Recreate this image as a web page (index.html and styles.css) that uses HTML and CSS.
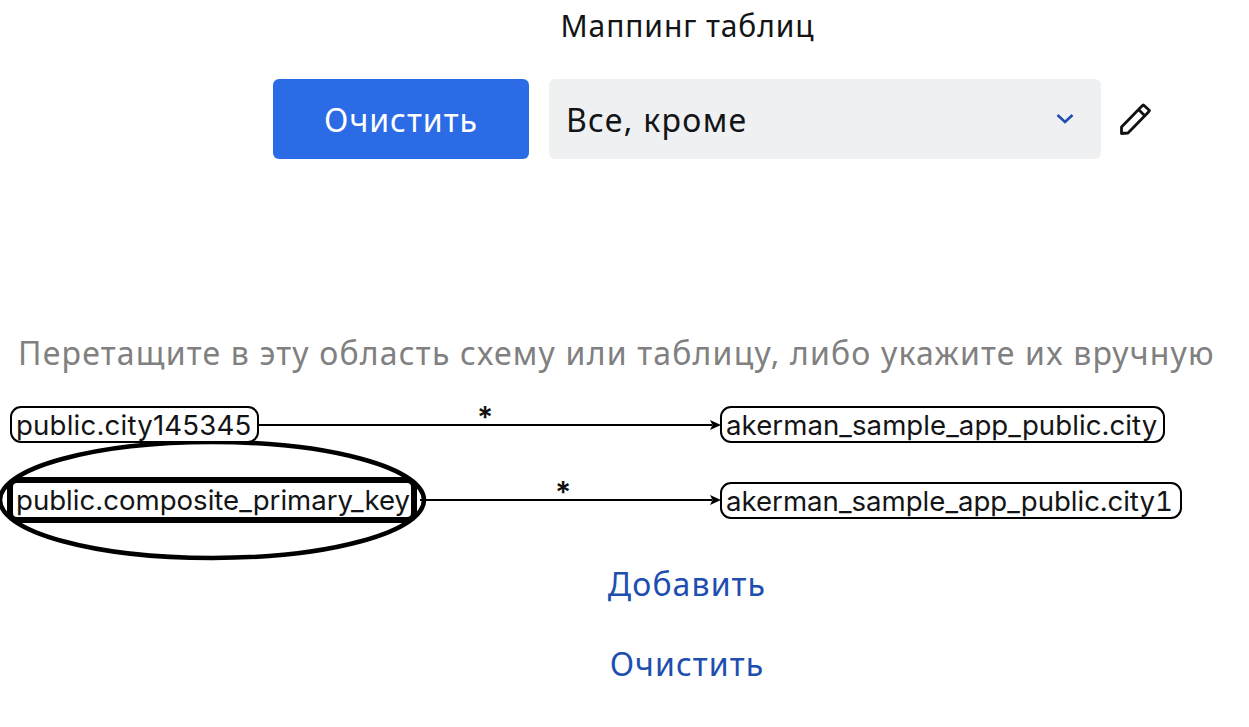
FILE: index.html
```html
<!DOCTYPE html>
<html lang="ru">
<head>
    <meta charset="UTF-8">
    <title>Маппинг таблиц</title>
    <link rel="stylesheet" href="styles.css">
</head>
<body>
    <div class="page">
        <h1 class="title">Маппинг таблиц</h1>

        <div class="toolbar">
            <button class="btn-clear">Очистить</button>
            <div class="select">
                <span>Все, кроме</span>
                <svg class="select-arrow" width="20" height="20" viewBox="0 0 20 20"><path d="M2.500 6 L10 13 L17.500 6" fill="none" stroke="#1d4eb0" stroke-width="2.600"/></svg>
            </div>
            <svg class="edit-icon" width="34" height="34" viewBox="0 0 34 34"><path d="M3.500 31.500 L3.500 25 L24 4 L25.500 3 L31.500 8.500 L30.500 10 L10 31 Z M20.500 7.500 L27 14" fill="none" stroke="#111" stroke-width="2.800" stroke-linejoin="round"/></svg>
        </div>

        <p class="hint">Перетащите в эту область схему или таблицу, либо укажите их вручную</p>

        <!-- Схема связей: узлы стоят на свободном холсте -->
        <div class="diagram">
            <svg class="links" width="1249" height="170" viewBox="0 0 1249 170">
                <ellipse cx="212" cy="100" rx="212" ry="58" fill="none" stroke="#000" stroke-width="4.500"/>
                <path d="M258 25 H712 M420 100 H712" stroke="#000" stroke-width="2"/>
                <path d="M710 20 L721 25 L710 30 L712.500 25 Z M710 95 L721 100 L710 105 L712.500 100 Z" fill="#000"/>
            </svg>
            <div class="node node-src1">public.city145345</div>
            <div class="node node-src2">public.composite_primary_key</div>
            <div class="node node-dst1">akerman_sample_app_public.city</div>
            <div class="node node-dst2">akerman_sample_app_public.city1</div>
            <span class="mark mark-1">*</span>
            <span class="mark mark-2">*</span>
        </div>

        <div class="actions">
            <a class="action">Добавить</a>
            <a class="action">Очистить</a>
        </div>
    </div>
</body>
</html>
```
FILE: styles.css
```css
body {
    margin: 0;
    background: #fff;
    font-family: "Noto Sans", sans-serif;
    color: #131416;
}

.page {
    width: 1249px;
    height: 727px;
    overflow: hidden;
    display: flex;
    flex-direction: column;
}

.title {
    margin: 6px 0 0;
    text-align: center;
    padding-left: 126px;
    font-size: 30px;
    line-height: 40px;
    font-weight: 400;
    letter-spacing: 0.9px;
}

.toolbar {
    display: flex;
    align-items: center;
    gap: 20px;
    margin: 33px 0 0 273px;
}

.btn-clear {
    width: 256px;
    height: 80px;
    border: none;
    border-radius: 6px;
    background: #2b6ce6;
    color: #fff;
    font-family: inherit;
    font-size: 32px;
    letter-spacing: 1px;
}

.select {
    width: 552px;
    height: 80px;
    box-sizing: border-box;
    padding: 0 26px 0 17px;
    display: flex;
    align-items: center;
    justify-content: space-between;
    background: #eff0f2;
    border-radius: 6px;
    font-size: 32px;
    letter-spacing: 1.3px;
}

.select-arrow {
    flex: none;
}

.edit-icon {
    flex: none;
    margin-left: -3px;
}

.hint {
    margin: 174px 0 0;
    padding-left: 18px;
    font-size: 32px;
    line-height: 40px;
    color: #808080;
    letter-spacing: 1.2px;
    white-space: nowrap;
}

.diagram {
    position: relative;
    height: 170px;
    margin-top: 27px;
    font-family: Inter, sans-serif;
}

.links {
    position: absolute;
    left: 0;
    top: 0;
}

.node {
    position: absolute;
    box-sizing: border-box;
    height: 37px;
    padding: 0 4px;
    border: 2px solid #000;
    border-radius: 11px;
    background: #fff;
    font-size: 27.6px;
    line-height: 34px;
    white-space: nowrap;
}

.node-src1 {
    left: 10px;
    top: 6px;
    width: 249px;
    letter-spacing: 0.2px;
}

.node-src2 {
    left: 7px;
    top: 77px;
    width: 410px;
    height: 46px;
    padding: 0 3px;
    border: 6px solid #000;
    border-radius: 10px;
}

.node-dst1 {
    left: 720px;
    top: 6px;
    width: 445px;
    letter-spacing: 0.06px;
}

.node-dst2 {
    left: 720px;
    top: 82px;
    width: 462px;
    font-variant-numeric: tabular-nums;
}

.mark {
    position: absolute;
    font-size: 30px;
    line-height: 30px;
    font-weight: 600;
    color: #111;
}

.mark-1 {
    left: 477px;
    top: 2px;
}

.mark-2 {
    left: 555px;
    top: 77px;
}

.actions {
    display: flex;
    flex-direction: column;
    align-items: center;
    gap: 40px;
    padding-left: 125px;
    margin-top: -6px;
}

.action {
    color: #1d4eb0;
    font-size: 32px;
    line-height: 40px;
    letter-spacing: 1.1px;
}
```
